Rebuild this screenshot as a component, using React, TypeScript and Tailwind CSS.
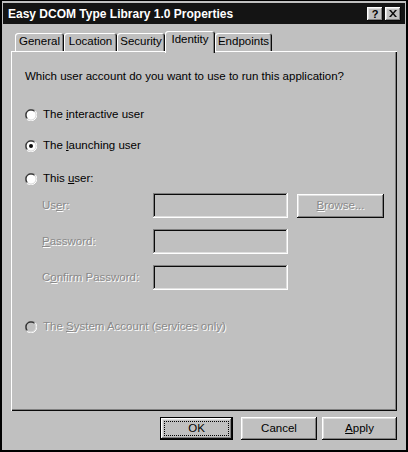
import React from 'react';

const font = "font-['Liberation_Sans',Arial,sans-serif]";
const raised =
  'shadow-[inset_-1px_-1px_#0a0a0a,inset_1px_1px_#ffffff,inset_-2px_-2px_#808080,inset_2px_2px_#dfdfdf]';
const sunken =
  'shadow-[inset_-1px_-1px_#ffffff,inset_1px_1px_#808080,inset_-2px_-2px_#dfdfdf,inset_2px_2px_#0a0a0a]';
const disabledText = 'text-[#8a8a8a] [text-shadow:1px_1px_0_#ffffff]';

const Radio: React.FC<{ checked?: boolean; disabled?: boolean }> = ({ checked, disabled }) => (
  <svg width="12" height="12" viewBox="0 0 12 12" className="shrink-0">
    <circle cx="6" cy="6" r="5" fill={disabled ? '#c0c0c0' : '#ffffff'} />
    <path d="M10.24 1.76 A6 6 0 0 0 1.76 10.24" stroke="#808080" strokeWidth="1" fill="none" />
    <path d="M9.54 2.46 A5 5 0 0 0 2.46 9.54" stroke="#0a0a0a" strokeWidth="1" fill="none" />
    <path d="M10.24 1.76 A6 6 0 0 1 1.76 10.24" stroke="#ffffff" strokeWidth="1" fill="none" />
    <path d="M9.54 2.46 A5 5 0 0 1 2.46 9.54" stroke="#dfdfdf" strokeWidth="1" fill="none" />
    {checked && <circle cx="6" cy="6" r="2" fill="#0a0a0a" />}
  </svg>
);

const RadioRow: React.FC<{
  checked?: boolean;
  disabled?: boolean;
  className?: string;
  children: React.ReactNode;
}> = ({ checked, disabled, className, children }) => (
  <div className={`flex items-center h-[16px] ml-[14px] gap-[6px] ${className ?? ''}`}>
    <Radio checked={checked} disabled={disabled} />
    <span className={disabled ? disabledText : 'text-black'}>{children}</span>
  </div>
);

const FieldRow: React.FC<{ label: React.ReactNode; className?: string; browse?: boolean }> = ({
  label,
  className,
  browse,
}) => (
  <div className={`flex items-center ml-[31px] h-[25px] ${className ?? ''}`}>
    <span className={`w-[111px] ${disabledText}`}>{label}</span>
    <div className={`w-[135px] h-[25px] bg-[#c0c0c0] ${sunken}`} />
    {browse && (
      <div
        className={`ml-[9px] w-[87px] h-[24px] flex items-center justify-center bg-[#c0c0c0] ${raised} ${disabledText}`}
      >
        <span>
          <u>B</u>rowse...
        </span>
      </div>
    )}
  </div>
);

const Tab: React.FC<{ label: string; width: string; selected?: boolean }> = ({
  label,
  width,
  selected,
}) => (
  <div
    className={`${width} flex justify-center bg-[#c0c0c0] rounded-t-[3px] shadow-[inset_1px_1px_#ffffff,inset_-1px_0_#0a0a0a,inset_-2px_0_#808080] ${
      selected ? 'h-[22px] pt-[3px] relative z-10 -mb-[2px]' : 'h-[18px] pt-[3px]'
    }`}
  >
    <span>{label}</span>
  </div>
);

const TitleButton: React.FC<{ children: React.ReactNode }> = ({ children }) => (
  <div className={`w-[16px] h-[14px] bg-[#c0c0c0] flex items-center justify-center ${raised}`}>
    {children}
  </div>
);

export default function App() {
  return (
    <div
      className={`${font} w-[408px] h-[452px] bg-[#c0c0c0] border-l-2 border-t border-r-2 border-b-2 border-black text-[11.5px] leading-none text-black flex flex-col p-[1px] pb-0 overflow-hidden`}
    >
      {/* title bar */}
      <div className="h-[21px] mt-[1px] bg-[#141414] flex items-center pl-[5px] pr-[4px] shrink-0">
        <span className="text-white font-bold text-[12px]">Easy DCOM Type Library 1.0 Properties</span>
        <div className="ml-auto flex gap-[2px]">
          <TitleButton>
            <span className="font-bold text-[11px] leading-none mt-[1px]">?</span>
          </TitleButton>
          <TitleButton>
            <svg width="8" height="7" viewBox="0 0 8 7">
              <path d="M0 0h2l2 2.5 2-2.5h2L5 3.5 8 7H6L4 4.5 2 7H0l3-3.5z" fill="#0a0a0a" />
            </svg>
          </TitleButton>
        </div>
      </div>

      {/* tabs */}
      <div className="flex items-end ml-[10px] pl-[2px] mt-[6px] h-[21px] shrink-0">
        <Tab label="General" width="w-[49px]" />
        <Tab label="Location" width="w-[53px]" />
        <Tab label="Security" width="w-[48px]" />
        <Tab label="Identity" width="w-[50px]" selected />
        <Tab label="Endpoints" width="w-[57px]" />
      </div>

      {/* panel */}
      <div
        className={`ml-[8px] w-[386px] h-[360px] shrink-0 flex flex-col shadow-[inset_1px_1px_#ffffff,inset_-1px_-1px_#0a0a0a,inset_-2px_-2px_#808080]`}
      >
        <div className="h-[16px] flex items-center ml-[14px] mt-[18px]">
          Which user account do you want to use to run this application?
        </div>
        <RadioRow className="mt-[22px]">
          The <u>i</u>nteractive user
        </RadioRow>
        <RadioRow checked className="mt-[15px]">
          The <u>l</u>aunching user
        </RadioRow>
        <RadioRow className="mt-[17px]">
          This <u>u</u>ser:
        </RadioRow>
        <FieldRow
          className="mt-[6px]"
          browse
          label={
            <>
              Us<u>e</u>r:
            </>
          }
        />
        <FieldRow
          className="mt-[11px]"
          label={
            <>
              <u>P</u>assword:
            </>
          }
        />
        <FieldRow
          className="mt-[11px]"
          label={
            <>
              C<u>o</u>nfirm Password:
            </>
          }
        />
        <RadioRow disabled className="mt-[29px]">
          The <u>S</u>ystem Account (services only)
        </RadioRow>
      </div>

      {/* dialog buttons */}
      <div className="flex ml-[157px] mt-[6px] h-[23px] shrink-0">
        <div className={`w-[73px] h-[23px] bg-[#c0c0c0] border border-black p-[3px] flex ${raised}`}>
          <div className="flex-1 border border-dotted border-black flex items-center justify-center">
            OK
          </div>
        </div>
        <div className={`ml-[8px] w-[76px] h-[23px] bg-[#c0c0c0] flex items-center justify-center ${raised}`}>
          Cancel
        </div>
        <div className={`ml-[5px] w-[75px] h-[23px] bg-[#c0c0c0] flex items-center justify-center ${raised}`}>
          <span>
            <u>A</u>pply
          </span>
        </div>
      </div>
    </div>
  );
}
